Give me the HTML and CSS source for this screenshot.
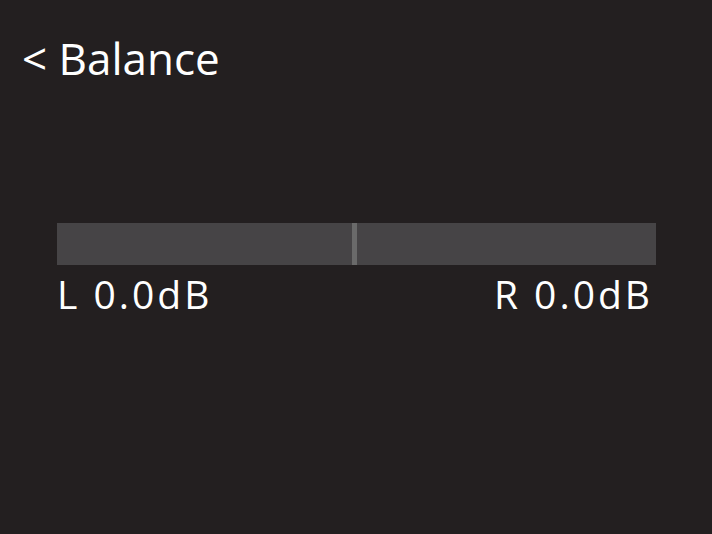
FILE: index.html
```html
<!DOCTYPE html>
<html>
<head>
<meta charset="utf-8">
<link rel="stylesheet" href="styles.css">
</head>
<body>
<div class="screen">
  <div class="title">&lt; Balance</div>
  <div class="slider">
    <div class="track"><div class="marker"></div></div>
    <div class="labels"><span>L 0.0dB</span><span>R 0.0dB</span></div>
  </div>
</div>
</body>
</html>
```
FILE: styles.css
```css
html, body { margin: 0; padding: 0; background: #231f20; }
.screen {
  width: 712px; height: 534px; box-sizing: border-box;
  padding: 33px 0 0 22px;
  font-family: "Open Sans", sans-serif; color: #ffffff;
}
.title { font-size: 44px; line-height: 50px; }
.slider { margin: 140px 0 0 35px; width: 599px; }
.track { height: 42px; background: #464446; display: flex; justify-content: center; }
.marker { width: 5px; background: #6a6a6a; margin-left: -4px; }
.labels {
  display: flex; justify-content: space-between;
  font-size: 39px; line-height: 40px; letter-spacing: 3px; margin-top: 9px; padding-right: 3px;
}
```
